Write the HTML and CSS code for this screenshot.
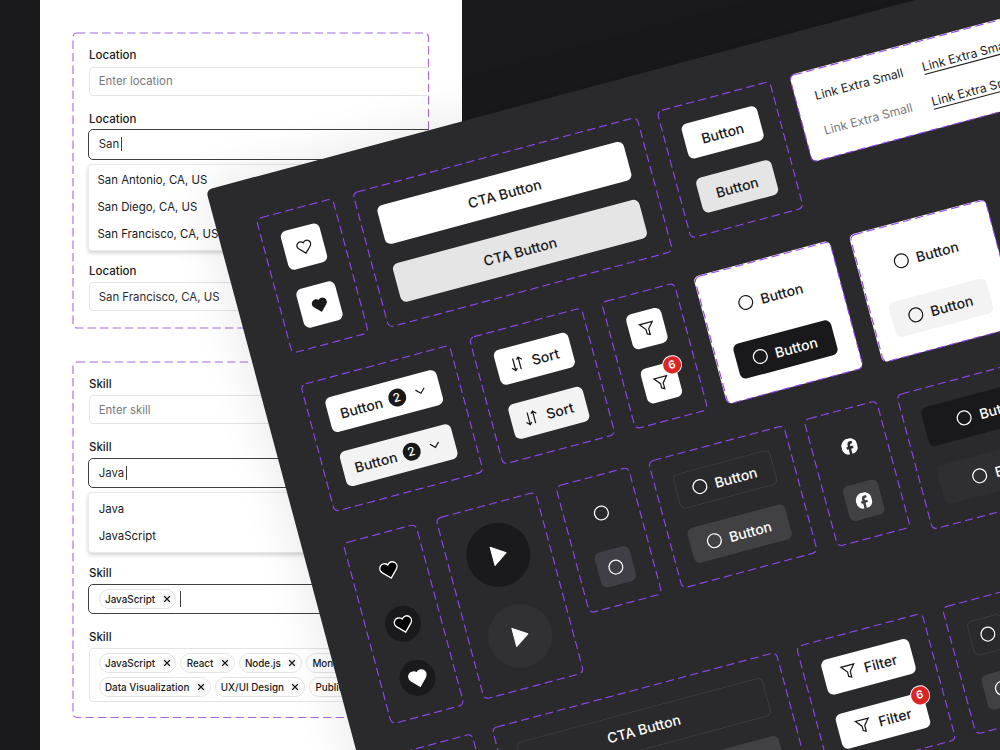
FILE: index.html
```html
<!DOCTYPE html>
<html lang="en">
<head>
<meta charset="utf-8">
<title>Components</title>
<link rel="stylesheet" href="styles.css">
</head>
<body>
<svg class="defs" width="0" height="0">
  <symbol id="heart" viewBox="0 0 24 24"><path d="M12 21.4 3.7 13C1.5 10.700 1.500 7.200 3.700 5 5.900 2.900 9.600 3 12 5.900 14.400 3 18.100 2.900 20.300 5 22.500 7.200 22.500 10.700 20.300 13Z"/></symbol>
  <symbol id="funnel" viewBox="0 0 24 24"><path d="M21.500 3.500h-19l7.500 9V19l4 2v-8.500z"/></symbol>
  <symbol id="sort" viewBox="0 0 24 24"><path d="M8 3v18M3.500 16.500 8 21l3-3M16 21V3M13 6l3-3 4.500 4.500"/></symbol>
  <symbol id="chev" viewBox="0 0 12 12"><path d="M1.500 3.500 6 8l4.500-4.500"/></symbol>
  <symbol id="ring" viewBox="0 0 20 20"><circle cx="10" cy="10" r="8.300"/></symbol>
  <symbol id="play" viewBox="-12 -12 24 24"><path d="M-6 -9.400 8 0-6 9.400z"/></symbol>
  <symbol id="fb" viewBox="2 2 20 20"><path d="M22 12c0-5.520-4.480-10-10-10S2 6.480 2 12c0 4.840 3.440 8.870 8 9.800V15H8v-3h2V9.500C10 7.570 11.570 6 13.500 6H16v3h-2c-.55 0-1 .45-1 1v2h3v3h-3v6.950c5.050-.5 9-4.760 9-9.950z"/></symbol>
  <symbol id="x" viewBox="0 0 8 8"><path d="M1 1l6 6M7 1 1 7"/></symbol>
</svg>
<main class="stage">
  <section class="panel">
    <div class="group group-location">
      <svg class="dash"><rect width="100%" height="100%" rx="4.200"/></svg>
      <div class="clip">
        <label class="label">Location</label>
        <div class="input placeholder">Enter location</div>
        <label class="label">Location</label>
        <div class="input focus">San<i class="caret"></i></div>
        <ul class="menu">
          <li>San Antonio, CA, US</li><li>San Diego, CA, US</li><li>San Francisco, CA, US</li>
        </ul>
        <label class="label after-menu">Location</label>
        <div class="input">San Francisco, CA, US</div>
      </div>
    </div>
    <div class="group group-skill">
      <svg class="dash"><rect width="100%" height="100%" rx="4.200"/></svg>
      <div class="clip">
        <label class="label">Skill</label>
        <div class="input placeholder">Enter skill</div>
        <label class="label">Skill</label>
        <div class="input focus">Java<i class="caret"></i></div>
        <ul class="menu indent">
          <li>Java</li><li>JavaScript</li>
        </ul>
        <label class="label after-menu">Skill</label>
        <div class="input focus"><span class="tag">JavaScript<svg><use href="#x"/></svg></span><i class="caret tall"></i></div>
        <label class="label">Skill</label>
        <div class="tags">
          <div class="tagrow"><span class="tag">JavaScript<svg><use href="#x"/></svg></span><span class="tag">React<svg><use href="#x"/></svg></span><span class="tag">Node.js<svg><use href="#x"/></svg></span><span class="tag">MongoDB<svg><use href="#x"/></svg></span></div>
          <div class="tagrow"><span class="tag">Data Visualization<svg><use href="#x"/></svg></span><span class="tag">UX/UI Design<svg><use href="#x"/></svg></span><span class="tag">Public Speaking<svg><use href="#x"/></svg></span></div>
        </div>
      </div>
    </div>
  </section>

  <section class="board">
    <div class="row">
      <div class="frame"><svg class="dash"><rect width="100%" height="100%" rx="5"/></svg>
        <div class="sq big"><svg class="ic16"><use href="#heart"/></svg></div>
        <div class="sq big"><svg class="ic16 solid"><use href="#heart"/></svg></div>
      </div>
      <div class="frame"><svg class="dash"><rect width="100%" height="100%" rx="5"/></svg>
        <div class="btn cta">CTA Button</div>
        <div class="btn cta pressed">CTA Button</div>
      </div>
      <div class="frame"><svg class="dash"><rect width="100%" height="100%" rx="5"/></svg>
        <div class="btn plain">Button</div>
        <div class="btn plain pressed">Button</div>
      </div>
      <div class="frame paper links"><svg class="dash"><rect width="100%" height="100%" rx="5"/></svg>
        <div class="linkrow"><a>Link Extra Small</a><a class="under">Link Extra Small</a></div>
        <div class="linkrow"><a class="muted">Link Extra Small</a><a class="under">Link Extra Small</a></div>
      </div>
    </div>

    <div class="row second">
      <div class="frame nudge"><svg class="dash"><rect width="100%" height="100%" rx="5"/></svg>
        <div class="btn drop">Button<b class="count">2</b><svg class="chev"><use href="#chev"/></svg></div>
        <div class="btn drop hover">Button<b class="count">2</b><svg class="chev"><use href="#chev"/></svg></div>
      </div>
      <div class="frame"><svg class="dash"><rect width="100%" height="100%" rx="5"/></svg>
        <div class="btn sort"><svg class="ic16"><use href="#sort"/></svg>Sort</div>
        <div class="btn sort hover"><svg class="ic16"><use href="#sort"/></svg>Sort</div>
      </div>
      <div class="frame"><svg class="dash"><rect width="100%" height="100%" rx="5"/></svg>
        <div class="sq"><svg class="ic16"><use href="#funnel"/></svg></div>
        <div class="sq"><svg class="ic16"><use href="#funnel"/></svg><b class="badge">6</b></div>
      </div>
      <div class="frame paper"><svg class="dash"><rect width="100%" height="100%" rx="5"/></svg>
        <div class="btn icon"><svg class="ic16"><use href="#ring"/></svg>Button</div>
        <div class="btn icon black"><svg class="ic16"><use href="#ring"/></svg>Button</div>
      </div>
      <div class="frame paper"><svg class="dash"><rect width="100%" height="100%" rx="5"/></svg>
        <div class="btn icon"><svg class="ic16"><use href="#ring"/></svg>Button</div>
        <div class="btn icon hover"><svg class="ic16"><use href="#ring"/></svg>Button</div>
      </div>
    </div>

    <div class="row third">
      <div class="frame"><svg class="dash"><rect width="100%" height="100%" rx="5"/></svg>
        <div class="round clear"><svg class="like"><use href="#heart"/></svg></div>
        <div class="round"><svg class="like"><use href="#heart"/></svg></div>
        <div class="round"><svg class="like liked"><use href="#heart"/></svg></div>
      </div>
      <div class="frame"><svg class="dash"><rect width="100%" height="100%" rx="5"/></svg>
        <div class="player"><svg><use href="#play"/></svg></div>
        <div class="player lit"><svg><use href="#play"/></svg></div>
      </div>
      <div class="frame"><svg class="dash"><rect width="100%" height="100%" rx="5"/></svg>
        <div class="sq ghost"><svg class="ic16"><use href="#ring"/></svg></div>
        <div class="sq ghost slate"><svg class="ic16"><use href="#ring"/></svg></div>
      </div>
      <div class="frame"><svg class="dash"><rect width="100%" height="100%" rx="5"/></svg>
        <div class="btn icon outline"><svg class="ic16"><use href="#ring"/></svg>Button</div>
        <div class="btn icon gray"><svg class="ic16"><use href="#ring"/></svg>Button</div>
      </div>
      <div class="frame"><svg class="dash"><rect width="100%" height="100%" rx="5"/></svg>
        <div class="sq ghost"><svg class="fb"><use href="#fb"/></svg></div>
        <div class="sq ghost gray"><svg class="fb"><use href="#fb"/></svg></div>
      </div>
      <div class="frame"><svg class="dash"><rect width="100%" height="100%" rx="5"/></svg>
        <div class="btn icon large black"><svg class="ic16"><use href="#ring"/></svg>Button</div>
        <div class="btn icon large soft"><svg class="ic16"><use href="#ring"/></svg>Button</div>
      </div>
    </div>

    <div class="row fourth">
      <div class="frame"><svg class="dash"><rect width="100%" height="100%" rx="5"/></svg>
        <div class="sq ghost"></div>
        <div class="sq ghost"></div>
      </div>
      <div class="frame"><svg class="dash"><rect width="100%" height="100%" rx="5"/></svg>
        <div class="btn cta outline">CTA Button</div>
        <div class="btn cta gray">CTA Button</div>
      </div>
      <div class="frame"><svg class="dash"><rect width="100%" height="100%" rx="5"/></svg>
        <div class="btn filter"><svg class="ic16"><use href="#funnel"/></svg>Filter</div>
        <div class="btn filter"><svg class="ic16"><use href="#funnel"/></svg>Filter<b class="badge">6</b></div>
      </div>
      <div class="frame"><svg class="dash"><rect width="100%" height="100%" rx="5"/></svg>
        <div class="sq ghost outline"><svg class="ic16"><use href="#ring"/></svg></div>
        <div class="sq ghost gray"><svg class="ic16"><use href="#ring"/></svg></div>
      </div>
    </div>
  </section>
</main>
</body>
</html>
```
FILE: styles.css
```css
* { box-sizing: border-box; }
body {
  margin: 0;
  background: #19191b;
  font-family: Inter, "Liberation Sans", sans-serif;
  color: #19191b;
}
.defs { position: absolute; }
.stage {
  position: relative;
  width: 1000px;
  height: 750px;
  overflow: hidden;
  background: #19191b;
}

/* Form panel */
.panel {
  width: 421.500px;
  height: 750px;
  margin-left: 40px;
  padding: 33px 33px 0;
  background: #fff;
}
.group {
  position: relative;
  width: 355.500px;
}
.group-location { height: 295px; margin-bottom: 33.500px; }
.group-skill { height: 355.500px; }
.clip {
  height: 100%;
  padding: 14px 0 0 16px;
  overflow: hidden;
}
.dash {
  position: absolute;
  inset: 0;
  width: 100%;
  height: 100%;
  overflow: visible;
  fill: none;
  stroke: #8f48f0;
  stroke-width: 1.100;
  stroke-dasharray: 8.330 4.170;
  pointer-events: none;
}
.board .dash {
  inset: .5px;
  width: calc(100% - 1px);
  height: calc(100% - 1px);
}
.panel .dash { stroke: #a668dd; }
.label {
  display: block;
  height: 16px;
  margin: 15px 0 3.600px;
  font-size: 11.500px;
  font-weight: 500;
  line-height: 16px;
}
.label:first-child { margin-top: 0; }
.label.after-menu { margin-top: 12px; }
.input {
  display: flex;
  align-items: center;
  width: 420px;
  height: 29px;
  padding-left: 8.700px;
  border: 1px solid #e4e4e7;
  border-radius: 4px;
  background: #fff;
  font-size: 11.400px;
  color: #2b2b2e;
}
.placeholder { color: #77777b; }
.input.focus {
  height: 30.500px;
  margin: -1px 0 -.5px -1px;
  padding-left: 9.700px;
  border-color: #3f3f43;
  border-radius: 5px;
}
.caret {
  width: 1px;
  height: 14px;
  margin-left: 1.500px;
  background: #3f3f43;
}
.caret.tall { height: 16px; margin-left: 4px; }
.menu {
  width: 420px;
  margin: 4.600px 0 0 -1px;
  padding: 2.600px 0 2.400px;
  list-style: none;
  border: 1px solid #e9e9eb;
  border-radius: 4px;
  background: #fff;
  box-shadow: 0 2px 4px rgba(0, 0, 0, .18);
  font-size: 11.400px;
}
.menu li { height: 26.700px; padding-left: 8.500px; line-height: 26.700px; }
.menu.indent { padding: 3px 0 2px; }
.menu.indent li { height: 27px; padding-left: 9.700px; line-height: 27px; }
.tags {
  display: flex;
  flex-direction: column;
  gap: 4px;
  width: 420px;
  height: 54px;
  padding: 4px 0 0 8.700px;
  border: 1px solid #e4e4e7;
  border-radius: 4px;
}
.tagrow { display: flex; gap: 4px; }
.tag {
  display: flex;
  align-items: center;
  height: 20px;
  padding: 0 4.700px 0 5.300px;
  border: 1px solid #e4e4e7;
  border-radius: 10px;
  font-size: 9.850px;
  font-weight: 500;
  color: #19191b;
  white-space: nowrap;
}
.tag svg {
  width: 8px;
  height: 8px;
  margin-left: 7.500px;
  border-radius: 50%;
  background: #f4f4f5;
  box-shadow: 0 0 0 1.500px #f4f4f5;
  fill: none;
  stroke: #19191b;
  stroke-width: 1.200;
}

/* Tilted component board, lying over the panel */
.board {
  position: absolute;
  left: 206px;
  top: 190px;
  width: 1100px;
  height: 900px;
  padding: 40px;
  border-radius: 6px;
  background: #2a2a2c;
  box-shadow: 0 0 50px rgba(0, 0, 0, .1);
  transform: rotate(-15deg);
  transform-origin: 0 0;
}
.row {
  display: flex;
  align-items: flex-start;
  gap: 20px;
  height: 170px;
}
.row.second { height: 166px; }
.row.third { height: 217.500px; }
.frame {
  position: relative;
  flex: none;
  display: flex;
  flex-direction: column;
  gap: 20px;
  padding: 20px;
}
.nudge { top: 2px; }
.paper { background: #fff; border-radius: 5.500px; }
.links { width: 420px; padding: 19px 20px; }
.linkrow { display: flex; gap: 20px; height: 16px; font-size: 12.150px; line-height: 15px; white-space: nowrap; }
.muted { color: #77777b; }
.under { height: 16px; border-bottom: 1px solid #19191b; }

.btn {
  position: relative;
  display: flex;
  align-items: center;
  justify-content: center;
  height: 36px;
  border-radius: 6px;
  background: #fff;
  font-size: 14px;
  font-weight: 500;
  color: #19191b;
  white-space: nowrap;
}
.cta { width: 255px; height: 40px; }
.plain { width: 77.500px; }
.pressed { background: #e5e5e5; }
.hover { background: #f3f3f3; }
.drop { width: 115px; justify-content: flex-start; padding-left: 12px; }
.count {
  width: 18px;
  height: 18px;
  margin: 0 9.500px 0 6px;
  border-radius: 50%;
  background: #19191b;
  color: #fff;
  font-size: 12px;
  font-weight: 500;
  line-height: 18px;
  text-align: center;
}
.chev { width: 12px; height: 12px; fill: none; stroke: #19191b; stroke-width: 1.200; }
.ic16 {
  flex: none;
  width: 16.670px;
  height: 16.670px;
  fill: none;
  stroke: currentColor;
  stroke-width: 1.800;
}
.ic16.solid { fill: currentColor; }
.sort { width: 77px; gap: 7.500px; justify-content: flex-start; padding-left: 11.700px; }
.filter { width: 91px; gap: 7.500px; justify-content: flex-start; padding-left: 17px; }
.icon { width: 101px; gap: 7.500px; justify-content: flex-start; padding-left: 15.500px; }
.icon .ic16, .ghost .ic16 { stroke-width: 1.500; }
.large { width: 136px; height: 40px; padding-left: 32px; }
.btn.black { background: #19191b; color: #fff; }
.btn.soft { background: #2f2f31; color: #fff; }
.btn.outline, .sq.outline { background: none; box-shadow: inset 0 0 0 1px #3d3d40; color: #fff; }
.btn.gray, .sq.gray { background: #414143; color: #fff; }

.sq {
  position: relative;
  display: flex;
  align-items: center;
  justify-content: center;
  width: 36px;
  height: 36px;
  border-radius: 6px;
  background: #fff;
}
.sq.big { width: 40px; height: 40px; }
.sq.ghost { color: #fff; }
.ghost { background: none; }
.sq.slate { background: #3f3f45; }
.badge {
  position: absolute;
  top: -6.500px;
  right: -6.500px;
  width: 19.500px;
  height: 19.500px;
  border: 1px solid #fff;
  border-radius: 50%;
  background: #dc2626;
  color: #fff;
  font-size: 11px;
  font-weight: 600;
  line-height: 17.500px;
  text-align: center;
}
.round {
  display: flex;
  align-items: center;
  justify-content: center;
  width: 36px;
  height: 36px;
  border-radius: 50%;
  background: #1a1a1c;
}
.round.clear { background: none; }
.like { width: 21px; height: 21px; fill: #000; stroke: #fff; stroke-width: 1.600; }
.like.liked { fill: #fff; }
.player {
  display: flex;
  align-items: center;
  justify-content: center;
  width: 64px;
  height: 64px;
  border-radius: 50%;
  background: #1a1a1c;
}
.player.lit { background: #313133; }
.player svg { width: 24px; height: 24px; fill: #fff; stroke: #fff; stroke-width: 1; stroke-linejoin: round; }
.fb { width: 16.670px; height: 16.670px; fill: #fff; }
```
